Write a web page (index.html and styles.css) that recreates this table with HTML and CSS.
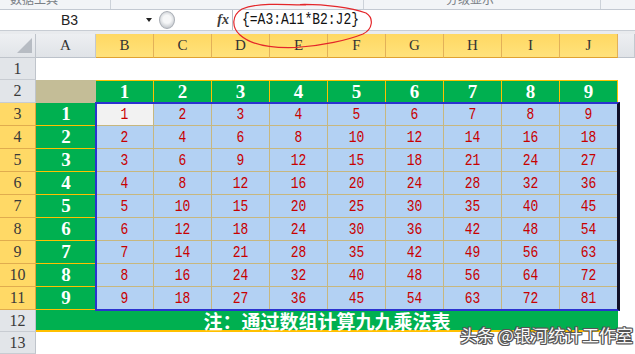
FILE: index.html
```html
<!DOCTYPE html>
<html>
<head>
<meta charset="utf-8">
<link rel="stylesheet" href="styles.css">
</head>
<body>
<div class="ribbon">
  <div class="rg rg1"><span>数据工具</span></div>
  <div class="rg rg2"></div>
  <div class="rg rg3"><span>分级显示</span></div>
  <div class="rg rg4"></div>
</div>
<div class="fbar">
  <div class="namebox"><span>B3</span><span class="nb-arrow"></span></div>
  <div class="fmid"><span class="grip"></span><span class="fx">fx</span></div>
  <div class="finput"><span>{=A3:A11*B2:J2}</span></div>
</div>
<div class="gap"></div>
<div class="sheet">
  <div class="corner"><span class="tri"></span></div>
  <div class="ch">A</div>
  <div class="chs">
    <div class="ch">B</div><div class="ch">C</div><div class="ch">D</div><div class="ch">E</div><div class="ch">F</div><div class="ch">G</div><div class="ch">H</div><div class="ch">I</div><div class="ch">J</div>
  </div>
  <div class="ch"></div>

  <div class="rh">1</div><div class="blank span3"></div>

  <div class="rh">2</div>
  <div class="tan"></div>
  <div class="hdrnums">
    <div>1</div><div>2</div><div>3</div><div>4</div><div>5</div><div>6</div><div>7</div><div>8</div><div>9</div>
  </div>
  <div class="blank"></div>

  <div class="rhs">
    <div class="rh">3</div><div class="rh">4</div><div class="rh">5</div><div class="rh">6</div><div class="rh">7</div><div class="rh">8</div><div class="rh">9</div><div class="rh">10</div><div class="rh">11</div>
  </div>
  <div class="acol">
    <div>1</div><div>2</div><div>3</div><div>4</div><div>5</div><div>6</div><div>7</div><div>8</div><div>9</div>
  </div>
  <div class="block">
    <div class="c active"><span>1</span></div><div class="c"><span>2</span></div><div class="c"><span>3</span></div><div class="c"><span>4</span></div><div class="c"><span>5</span></div><div class="c"><span>6</span></div><div class="c"><span>7</span></div><div class="c"><span>8</span></div><div class="c"><span>9</span></div>
    <div class="c"><span>2</span></div><div class="c"><span>4</span></div><div class="c"><span>6</span></div><div class="c"><span>8</span></div><div class="c"><span>10</span></div><div class="c"><span>12</span></div><div class="c"><span>14</span></div><div class="c"><span>16</span></div><div class="c"><span>18</span></div>
    <div class="c"><span>3</span></div><div class="c"><span>6</span></div><div class="c"><span>9</span></div><div class="c"><span>12</span></div><div class="c"><span>15</span></div><div class="c"><span>18</span></div><div class="c"><span>21</span></div><div class="c"><span>24</span></div><div class="c"><span>27</span></div>
    <div class="c"><span>4</span></div><div class="c"><span>8</span></div><div class="c"><span>12</span></div><div class="c"><span>16</span></div><div class="c"><span>20</span></div><div class="c"><span>24</span></div><div class="c"><span>28</span></div><div class="c"><span>32</span></div><div class="c"><span>36</span></div>
    <div class="c"><span>5</span></div><div class="c"><span>10</span></div><div class="c"><span>15</span></div><div class="c"><span>20</span></div><div class="c"><span>25</span></div><div class="c"><span>30</span></div><div class="c"><span>35</span></div><div class="c"><span>40</span></div><div class="c"><span>45</span></div>
    <div class="c"><span>6</span></div><div class="c"><span>12</span></div><div class="c"><span>18</span></div><div class="c"><span>24</span></div><div class="c"><span>30</span></div><div class="c"><span>36</span></div><div class="c"><span>42</span></div><div class="c"><span>48</span></div><div class="c"><span>54</span></div>
    <div class="c"><span>7</span></div><div class="c"><span>14</span></div><div class="c"><span>21</span></div><div class="c"><span>28</span></div><div class="c"><span>35</span></div><div class="c"><span>42</span></div><div class="c"><span>49</span></div><div class="c"><span>56</span></div><div class="c"><span>63</span></div>
    <div class="c"><span>8</span></div><div class="c"><span>16</span></div><div class="c"><span>24</span></div><div class="c"><span>32</span></div><div class="c"><span>40</span></div><div class="c"><span>48</span></div><div class="c"><span>56</span></div><div class="c"><span>64</span></div><div class="c"><span>72</span></div>
    <div class="c"><span>9</span></div><div class="c"><span>18</span></div><div class="c"><span>27</span></div><div class="c"><span>36</span></div><div class="c"><span>45</span></div><div class="c"><span>54</span></div><div class="c"><span>63</span></div><div class="c"><span>72</span></div><div class="c"><span>81</span></div>
  </div>
  <div class="blank"></div>

  <div class="rh">12</div><div class="note span2">注：通过数组计算九九乘法表</div><div class="blank"></div>

  <div class="rh">13</div><div class="blank span3"></div>
</div>

<svg class="annot" viewBox="0 0 635 354" width="635" height="354">
  <path d="M300 4.5 C 325 4, 352 8, 366 13 C 374 18, 373 29, 363 34 C 348 40, 322 46, 296 47.5 C 270 48.5, 250 44, 240 35 C 231 27, 232 15, 242 9 C 256 3, 280 4, 306 5" fill="none" stroke="#E4262A" stroke-width="1.2"/>
</svg>
<div class="wm">头条 @银河统计工作室</div>
</body>
</html>
```
FILE: styles.css
```css
* { box-sizing: border-box; }
html, body { margin: 0; padding: 0; }
body {
  width: 635px;
  height: 354px;
  overflow: hidden;
  position: relative;
  background: #fff;
  font-family: "Liberation Sans", sans-serif;
}

/* ribbon remnant */
.ribbon {
  display: flex;
  height: 10px;
  background: #F2F4F7;
  border-bottom: 1px solid #C3C9D2;
  overflow: hidden;
}
.rg {
  height: 100%;
  overflow: hidden;
  border-right: 1px solid #CDD2D9;
}
.rg span {
  display: block;
  font-family: "Noto Sans CJK SC", sans-serif;
  font-size: 12px;
  line-height: 12px;
  margin-top: -7px;
  color: #7a7f86;
}
.rg1 { width: 111px; padding-left: 10px; }
.rg2 { width: 253px; }
.rg3 { width: 237px; padding-right: 24px; text-align: center; }
.rg4 { flex: 1; border-right: none; }

/* formula bar */
.fbar {
  display: flex;
  height: 21px;
  background: #fff;
  border-bottom: 1px solid #C8CDD4;
}
.namebox {
  width: 155px;
  position: relative;
  display: flex;
  align-items: center;
  justify-content: center;
  padding-right: 16px;
  font-size: 14px;
  color: #222;
}
.nb-arrow {
  position: absolute;
  left: 146px;
  top: 8px;
  width: 0;
  height: 0;
  border-left: 3.5px solid transparent;
  border-right: 3.5px solid transparent;
  border-top: 4px solid #222;
}
.fmid {
  width: 77px;
  display: flex;
  align-items: center;
  padding-left: 4px;
}
.grip {
  width: 16px;
  height: 18px;
  border-radius: 50%;
  border: 1px solid #A8ADB4;
  background: radial-gradient(circle at 50% 45%, #f6f7f8 0 35%, #c7cbd0 75%);
}
.fx {
  margin-left: auto;
  margin-right: 3px;
  font-family: "Liberation Serif", serif;
  font-style: italic;
  font-weight: bold;
  font-size: 14px;
  color: #3a3a3a;
}
.finput {
  flex: 1;
  border-left: 1px solid #B9BEC6;
  padding-left: 9px;
  font-family: "Liberation Mono", monospace;
  font-size: 13px;
  line-height: 20px;
  color: #111;
}
.finput span { display: inline-block; transform: scaleY(1.2); }

.gap { height: 3px; background: #E9EBEE; }

/* sheet */
.sheet {
  display: grid;
  grid-template-columns: 36px 60px 522px 1fr;
  grid-template-rows: 24px 22px 23px 207px 22px 1fr;
  height: 320px;
}
.corner {
  position: relative;
  background: linear-gradient(#EEF0F3, #E1E4E8);
  border-right: 1px solid #BFC4CB;
  border-bottom: 1px solid #BFC4CB;
}
.tri {
  position: absolute;
  right: 3px;
  bottom: 4px;
  width: 0;
  height: 0;
  border-left: 15px solid transparent;
  border-bottom: 15px solid #B7BCC3;
}
.ch {
  display: flex;
  align-items: center;
  justify-content: center;
  font-family: "Liberation Serif", serif;
  font-size: 15px;
  color: #333;
  background: linear-gradient(#EDEFF2, #E0E3E7);
  border-right: 1px solid #C3C8CF;
  border-bottom: 1px solid #BCC2CA;
}
.chs { display: flex; }
.chs .ch {
  width: 58px;
  background: linear-gradient(#FFD862, #FFE27C);
  border-right: 1px solid #E2B158;
  border-bottom: 1px solid #E0A232;
}

.rh {
  display: flex;
  align-items: center;
  justify-content: center;
  font-family: "Liberation Serif", serif;
  font-size: 16px;
  color: #3a3a3a;
  background: #E2E5E9;
  border-right: 1px solid #BFC4CB;
  border-bottom: 1px solid #C8CCD2;
}
.rhs { display: flex; flex-direction: column; }
.rhs .rh {
  height: 23px;
  background: #FFD966;
  border-right-color: #E2A53A;
  border-bottom-color: #E0AC4E;
}

.blank { background: #fff; }
.span3 { grid-column: span 3; }
.span2 { grid-column: span 2; }
.tan { background: #C4BD97; }

.hdrnums { display: flex; }
.hdrnums div,
.acol div {
  display: flex;
  align-items: center;
  justify-content: center;
  background: #00B050;
  color: #fff;
  font-family: "Liberation Serif", serif;
  font-weight: bold;
  font-size: 19px;
}
.hdrnums div {
  width: 58px;
  border-top: 1px solid #FFC000;
  border-right: 1px solid #FFC000;
}
.acol { display: flex; flex-direction: column; }
.acol div {
  height: 23px;
  border-bottom: 1px solid #FFC000;
}

.block {
  position: relative;
  display: grid;
  grid-template-columns: repeat(9, 58px);
  grid-auto-rows: 23px;
  background: #B3D1F3;
}
.c {
  display: flex;
  align-items: center;
  justify-content: center;
  border-right: 1px solid #C7B77F;
  border-bottom: 1px solid #C7B77F;
  color: #C80000;
  font-family: "Liberation Mono", monospace;
  font-size: 13px;
}
.c span { display: inline-block; transform: scaleY(1.3); }
.c.active { background: #F2F2F2; }
.block::after {
  content: "";
  position: absolute;
  left: -1px;
  top: -1px;
  right: -2px;
  bottom: -1px;
  border: 2px solid #2B33CF;
  border-right: 3px solid #101028;
  pointer-events: none;
}

.note {
  display: flex;
  align-items: center;
  justify-content: center;
  background: #00B050;
  border-bottom: 2px solid #FFC000;
  color: #fff;
  font-family: "Noto Sans CJK SC", sans-serif;
  font-weight: bold;
  font-size: 19px;
  line-height: 1;
}

.annot {
  position: absolute;
  left: 0;
  top: 0;
  pointer-events: none;
}
.wm {
  position: absolute;
  left: 460px;
  top: 325px;
  font-family: "Noto Sans CJK SC", sans-serif;
  font-size: 17px;
  line-height: 20px;
  color: #fafafa;
  white-space: nowrap;
  text-shadow: 1px 0 #555, -1px 0 #555, 0 1px #555, 0 -1px #555,
    1px 1px #555, -1px -1px #555, 1px -1px #555, -1px 1px #555;
}
```
